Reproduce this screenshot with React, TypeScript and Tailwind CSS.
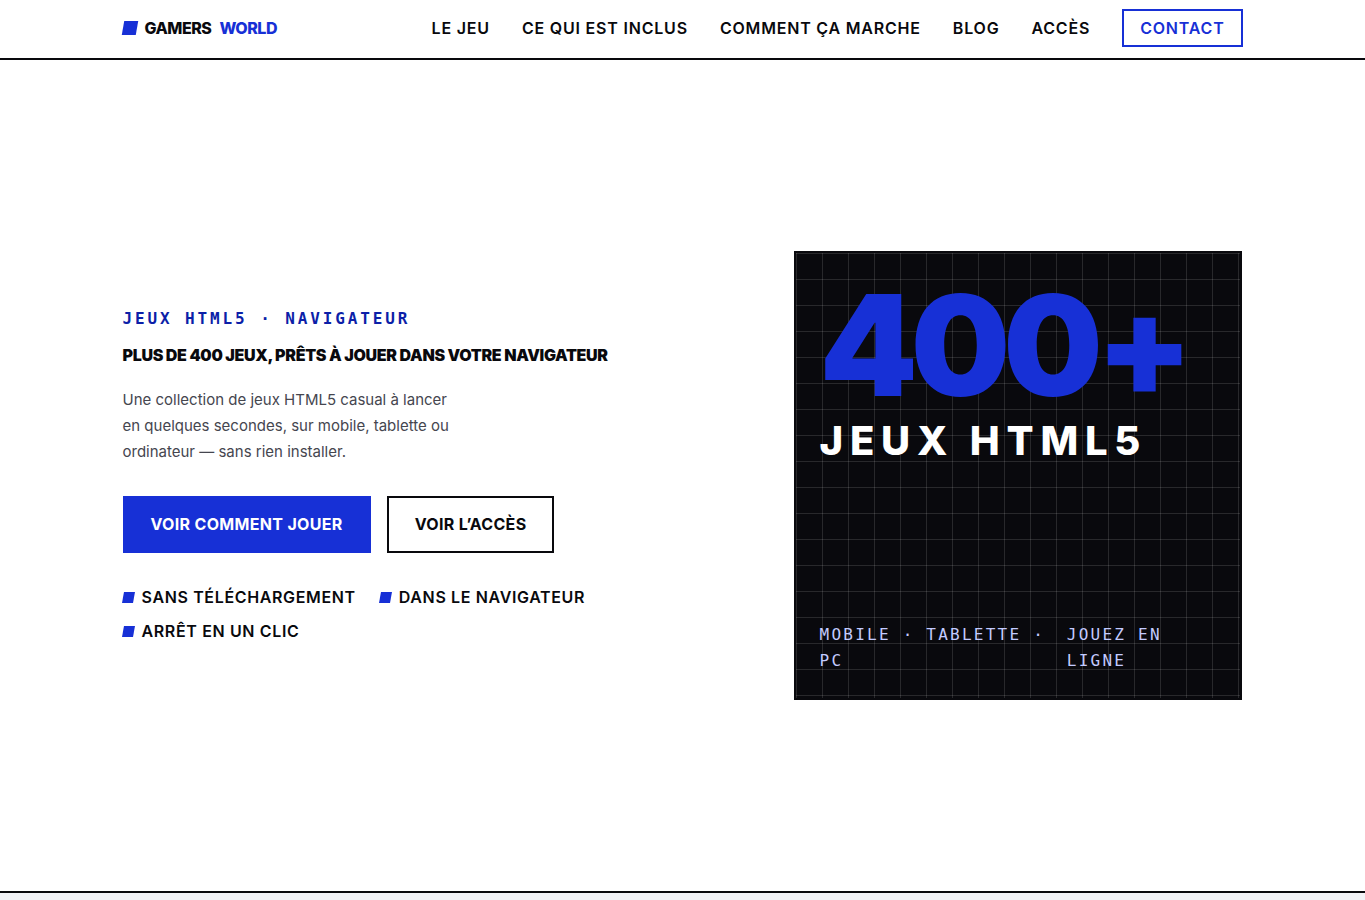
import { clsx } from 'clsx'

const navLinks = [
  { label: 'Le jeu', href: '#jeu' },
  { label: 'Ce qui est inclus', href: '#inclus' },
  { label: 'Comment ça marche', href: '#comment' },
  { label: 'Blog', href: '#blog' },
  { label: 'Accès', href: '#acces' },
]

const features = ['Sans téléchargement', 'Dans le navigateur', 'Arrêt en un clic']

const mono = "font-['DejaVu_Sans_Mono',monospace]"

function Mark({ className }: { className?: string }) {
  return <span aria-hidden="true" className={clsx('shrink-0 -skew-x-10 bg-[#1730d6]', className)} />
}

function Header() {
  return (
    <header className="border-b-2 border-[#09090d] bg-white pt-[9px] pb-[11px]">
      <div className="mx-auto flex w-full max-w-[1120px] items-center justify-between">
        <a href="#accueil" className="flex items-center gap-2 font-extrabold tracking-[-0.03em] uppercase">
          <Mark className="size-3.5" />
          <span>Gamers</span>
          <span className="text-[#1730d6]">World</span>
        </a>
        <nav aria-label="Navigation principale" className="flex items-center gap-8 font-semibold tracking-[0.05em] uppercase">
          {navLinks.map((link) => (
            <a key={link.href} href={link.href} className="hover:text-[#1730d6]">
              {link.label}
            </a>
          ))}
          <a
            href="#contact"
            className="border-2 border-[#1730d6] px-4 py-1 text-[#1730d6] hover:bg-[#1730d6] hover:text-white"
          >
            Contact
          </a>
        </nav>
      </div>
    </header>
  )
}

function Poster() {
  return (
    <div className="flex aspect-square flex-col justify-between border-2 border-[#09090d] bg-[#09090d] bg-[linear-gradient(#ffffff20_1px,transparent_1px),linear-gradient(90deg,#ffffff20_1px,transparent_1px)] bg-size-[26px_26px] p-6">
      <div className="uppercase">
        <p className="text-[140px] leading-[136px] font-black tracking-[-0.05em] text-[#1730d6]">400+</p>
        <p className="mt-1 text-[40px] leading-[48px] font-extrabold tracking-[0.17em] text-white">Jeux HTML5</p>
      </div>
      <div className={clsx(mono, 'flex justify-between gap-3 tracking-[0.14em] text-[#c3cbff] uppercase')}>
        <span>Mobile · Tablette · PC</span>
        <span>Jouez en ligne</span>
      </div>
    </div>
  )
}

function Hero() {
  return (
    <section id="accueil" className="border-b-2 border-[#09090d] bg-white py-[191px]">
      <div className="mx-auto grid w-full max-w-[1120px] grid-cols-[1.352fr_1fr] items-center gap-16">
        <div>
          <p className={clsx(mono, 'font-bold tracking-[0.18em] text-[#0c1fa8] uppercase')}>
            Jeux HTML5 · Navigateur
          </p>
          <h1 className="mt-[15px] leading-[17px] font-black tracking-[-0.02em] uppercase">
            Plus de 400 jeux, prêts à jouer dans votre navigateur
          </h1>
          <p className="mt-[23px] max-w-[336px] text-[15px] text-[#45464f]">
            Une collection de jeux HTML5 casual à lancer en quelques secondes, sur mobile, tablette ou ordinateur — sans
            rien installer.
          </p>
          <div className="mt-[31px] flex flex-wrap gap-4 leading-[27px] font-bold tracking-[0.02em] uppercase">
            <a href="#comment" className="border-2 border-[#1730d6] bg-[#1730d6] px-[26px] py-[13px] text-white">
              Voir comment jouer
            </a>
            <a href="#acces" className="border-2 border-[#09090d] px-[26px] py-[13px]">
              Voir l’accès
            </a>
          </div>
          <ul className="mt-[31px] flex flex-wrap gap-x-6 gap-y-2 font-semibold tracking-[0.04em] uppercase">
            {features.map((feature) => (
              <li key={feature} className="flex items-center gap-2">
                <Mark className="size-[11px]" />
                {feature}
              </li>
            ))}
          </ul>
        </div>
        <Poster />
      </div>
    </section>
  )
}

export default function App() {
  return (
    <div className="min-h-screen bg-[#f1f2f6] font-['Inter',sans-serif] text-base leading-[26px] text-[#09090d]">
      <Header />
      <main>
        <Hero />
      </main>
    </div>
  )
}
